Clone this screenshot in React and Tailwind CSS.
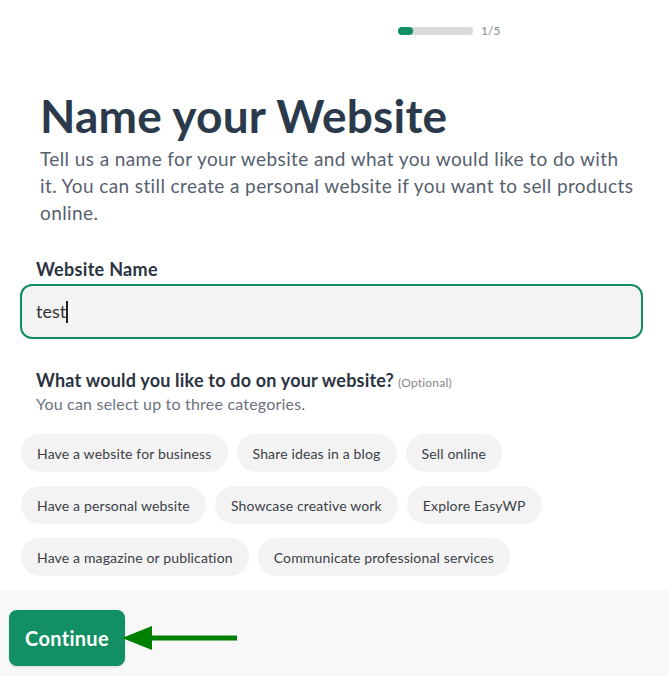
import React from "react";

const chips = [
  ["Have a website for business", "Share ideas in a blog", "Sell online"],
  ["Have a personal website", "Showcase creative work", "Explore EasyWP"],
  ["Have a magazine or publication", "Communicate professional services"],
];

export default function App() {
  return (
    <div className="w-[669px] h-[676px] bg-white flex flex-col overflow-hidden" style={{ fontFamily: "Lato, 'Open Sans', sans-serif" }}>
      <div className="flex items-center gap-2 pt-[27px] pl-[398px]">
        <div className="w-[75px] h-[8px] rounded-full bg-[#d9d9d9] flex">
          <div className="w-[15px] h-[8px] rounded-full bg-[#128f63]" />
        </div>
        <span className="text-[12px] leading-[8px] text-[#8a8a8a]">1/5</span>
      </div>

      <div className="flex-1 px-5">
        <h1 className="mt-[55px] pl-5 text-[46px] leading-[52px] font-bold text-[#2a3a4a] tracking-[0.2px]">Name your Website</h1>
        <p className="mt-[3px] pl-5 text-[19px] leading-[27px] text-[#56606e] tracking-[0.4px] whitespace-nowrap">
          Tell us a name for your website and what you would like to do with<br />
          it. You can still create a personal website if you want to sell products<br />
          online.
        </p>

        <label className="block mt-[32px] pl-4 text-[18px] leading-[22px] font-bold text-[#2a3340] tracking-[0.3px]">Website Name</label>
        <div className="mt-[4px] h-[55px] w-[623px] rounded-[12px] border-2 border-[#128a63] bg-[#f3f3f3] flex items-center pl-[14px]">
          <span className="text-[18px] text-[#333]">test</span>
          <span className="w-[1.5px] h-[22px] bg-[#222]" />
        </div>

        <div className="mt-[28px] pl-4 flex items-baseline gap-1">
          <span className="text-[18px] font-bold text-[#2a3340] tracking-[0.2px]">What would you like to do on your website?</span>
          <span className="text-[12px] text-[#888] tracking-[0.2px]">(Optional)</span>
        </div>
        <p className="pl-4 text-[16px] leading-[20px] text-[#6b7280] tracking-[0.2px]">You can select up to three categories.</p>

        <div className="mt-[20px] flex flex-col gap-[14px] pl-px">
          {chips.map((row, i) => (
            <div key={i} className="flex gap-[9px]">
              {row.map((c) => (
                <span key={c} className="h-[38px] px-4 rounded-full bg-[#f3f3f3] text-[14px] text-[#3a3f47] tracking-[0.15px] flex items-center">{c}</span>
              ))}
            </div>
          ))}
        </div>
      </div>

      <div className="h-[86px] bg-[#f8f8f8] flex items-start pt-[20px] px-[9px]">
        <button className="h-[56px] w-[116px] rounded-[8px] bg-[#128f63] text-white text-[20px] font-bold tracking-[0.3px] shadow-sm">Continue</button>
        <svg width="116" height="24" viewBox="0 0 116 24" className="-ml-[3px] mt-[16px]">
          <line x1="30" y1="12" x2="115" y2="12" stroke="#008000" strokeWidth="5" />
          <polygon points="0,12 30,0 30,24" fill="#008000" />
        </svg>
      </div>
    </div>
  );
}
